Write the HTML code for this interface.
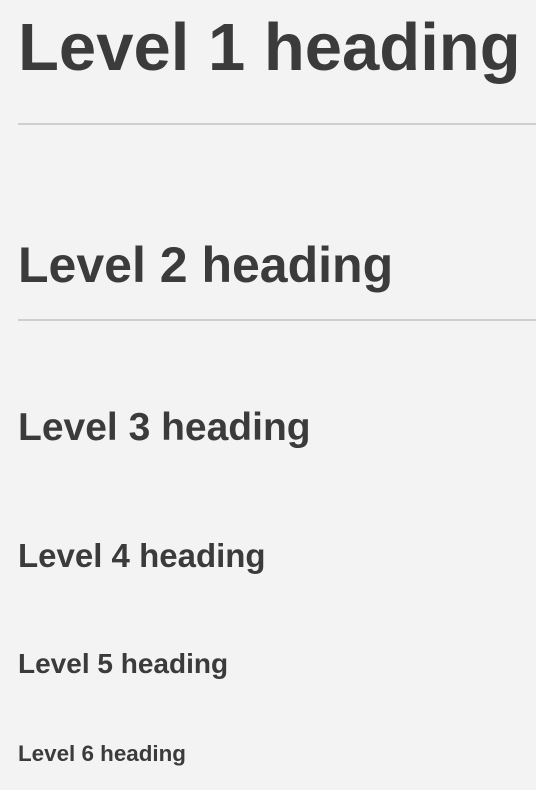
<!DOCTYPE html>
<html><head><style>
html,body{margin:0;padding:0;background:#f3f3f3;width:536px;height:790px;overflow:hidden;position:relative}
.h{position:absolute;left:18px;margin:0;font-family:"Liberation Sans",sans-serif;font-weight:bold;color:#3b3b3b;line-height:1;white-space:nowrap}
.hr{position:absolute;left:18px;right:0;height:2px;background:#cfcfcf}
</style></head><body>
<div class="h" style="top:14px;font-size:67px">Level 1 heading</div>
<div class="hr" style="top:123px"></div>
<div class="h" style="top:240px;font-size:50px">Level 2 heading</div>
<div class="hr" style="top:319px"></div>
<div class="h" style="top:408px;font-size:39px">Level 3 heading</div>
<div class="h" style="top:539px;font-size:33px">Level 4 heading</div>
<div class="h" style="top:650px;font-size:28px">Level 5 heading</div>
<div class="h" style="top:743px;font-size:22.4px">Level 6 heading</div>
</body></html>
